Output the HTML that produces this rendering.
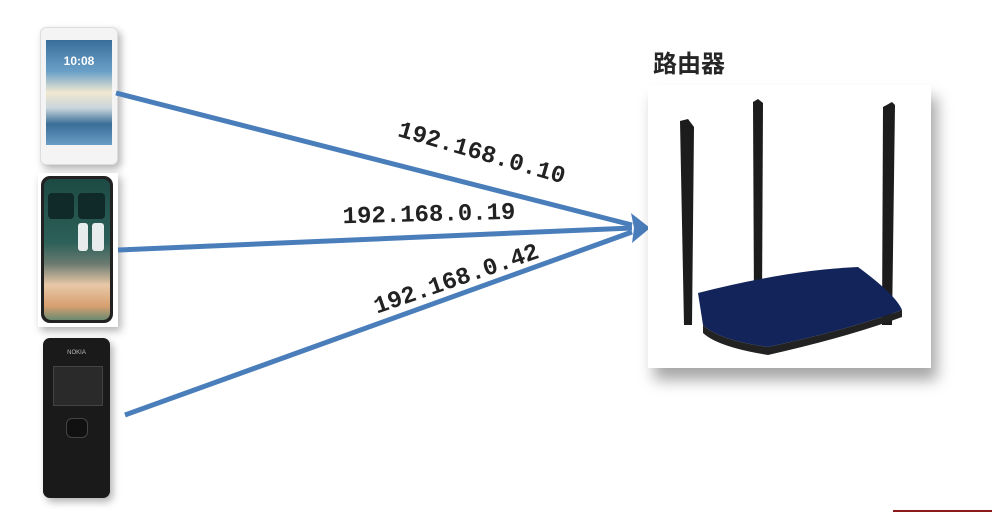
<!DOCTYPE html>
<html><head><meta charset="utf-8"><style>
html,body{margin:0;padding:0;background:#fff;width:992px;height:512px;overflow:hidden;position:relative;font-family:"Liberation Sans","Noto Sans CJK SC",sans-serif}
.title{position:absolute;left:653px;top:44px;font-size:24px;font-weight:bold;color:#262626;font-family:"Liberation Sans","Noto Sans CJK SC",sans-serif}
.router{position:absolute;left:648px;top:85px;width:283px;height:283px;background:#fff;box-shadow:6px 12px 14px rgba(0,0,0,0.35)}
</style></head><body>
<div style="position:absolute;left:40px;top:27px;width:76px;height:136px;background:#f4f4f4;border:1px solid #ddd;border-radius:6px;box-shadow:3px 4px 8px rgba(0,0,0,.3)">
 <div style="position:absolute;left:5px;top:12px;width:66px;height:105px;background:linear-gradient(#3a6e9a 0%,#6aa0c8 30%,#f0e8d0 50%,#c8d4dc 65%,#3a6e98 80%,#6a9cc4 100%)"></div>
 <div style="position:absolute;left:5px;top:26px;width:66px;text-align:center;color:#fff;font-size:12px;font-weight:bold">10:08</div>
</div>
<div style="position:absolute;left:38px;top:173px;width:80px;height:154px;background:#fff;box-shadow:3px 4px 8px rgba(0,0,0,.3)">
 <div style="position:absolute;left:3px;top:3px;width:72px;height:147px;border-radius:9px;background:#222"></div>
 <div style="position:absolute;left:6px;top:6px;width:66px;height:141px;border-radius:7px;background:linear-gradient(#1d4a44 0%,#2c6058 45%,#6a7a70 60%,#e8c8a8 75%,#d8a070 90%,#6a8a70 100%)"></div>
 <div style="position:absolute;left:10px;top:20px;width:26px;height:26px;border-radius:4px;background:#0f2a28"></div>
 <div style="position:absolute;left:40px;top:20px;width:27px;height:26px;border-radius:4px;background:#0f2a28"></div>
 <div style="position:absolute;left:40px;top:50px;width:10px;height:28px;border-radius:3px;background:#e8ecec"></div>
 <div style="position:absolute;left:54px;top:50px;width:12px;height:28px;border-radius:3px;background:#e8ecec"></div>
</div>
<div style="position:absolute;left:43px;top:338px;width:67px;height:160px;background:#1a1a1a;border-radius:7px;box-shadow:3px 4px 8px rgba(0,0,0,.3)">
 <div style="position:absolute;left:0;top:12px;width:67px;text-align:center;color:#bbb;font-size:6px">NOKIA</div>
 <div style="position:absolute;left:10px;top:28px;width:48px;height:38px;background:#2a2a2a;border:1px solid #444"></div>
 <div style="position:absolute;left:23px;top:80px;width:20px;height:18px;border-radius:6px;background:#111;border:1px solid #444"></div>
</div>
<svg width="992" height="512" style="position:absolute;left:0;top:0">
 <g stroke="#4a7ebb" stroke-width="5" fill="none">
  <line x1="116" y1="93" x2="632" y2="225"/>
  <line x1="118" y1="250" x2="632" y2="228"/>
  <line x1="125" y1="415" x2="632" y2="232"/>
 </g>
 <polygon points="650,228 631,213 634,228 632,243" fill="#4a7ebb"/>
 <g font-family="Liberation Mono, monospace" font-weight="bold" font-size="24" fill="#222" text-anchor="middle">
  <text x="482" y="160" transform="rotate(16 482 152)">192.168.0.10</text>
  <text x="429" y="221" transform="rotate(-1.5 429 214)">192.168.0.19</text>
  <text x="456" y="286" transform="rotate(-19 456 278)">192.168.0.42</text>
 </g>
 <line x1="893" y1="511" x2="992" y2="511" stroke="#8b1a1a" stroke-width="2"/>
</svg>
<div class="title">路由器</div>
<div class="router">
 <svg width="283" height="283">
  <polygon points="32,36 40,34 46,42 44,240 36,240" fill="#1c1c1c"/>
  <polygon points="105,17 110,14 115,18 114,222 106,222" fill="#1c1c1c"/>
  <polygon points="235,22 244,17 247,20 244,240 234,240" fill="#1c1c1c"/>
  <path d="M50,208 Q140,185 210,182 Q248,210 254,225 Q200,245 120,262 Q70,255 55,240 Z" fill="#13245a"/>
  <path d="M55,240 Q70,255 120,262 Q200,245 254,225 L254,232 Q200,252 120,270 Q70,262 55,248 Z" fill="#222"/>
 </svg>
</div>
</body></html>
